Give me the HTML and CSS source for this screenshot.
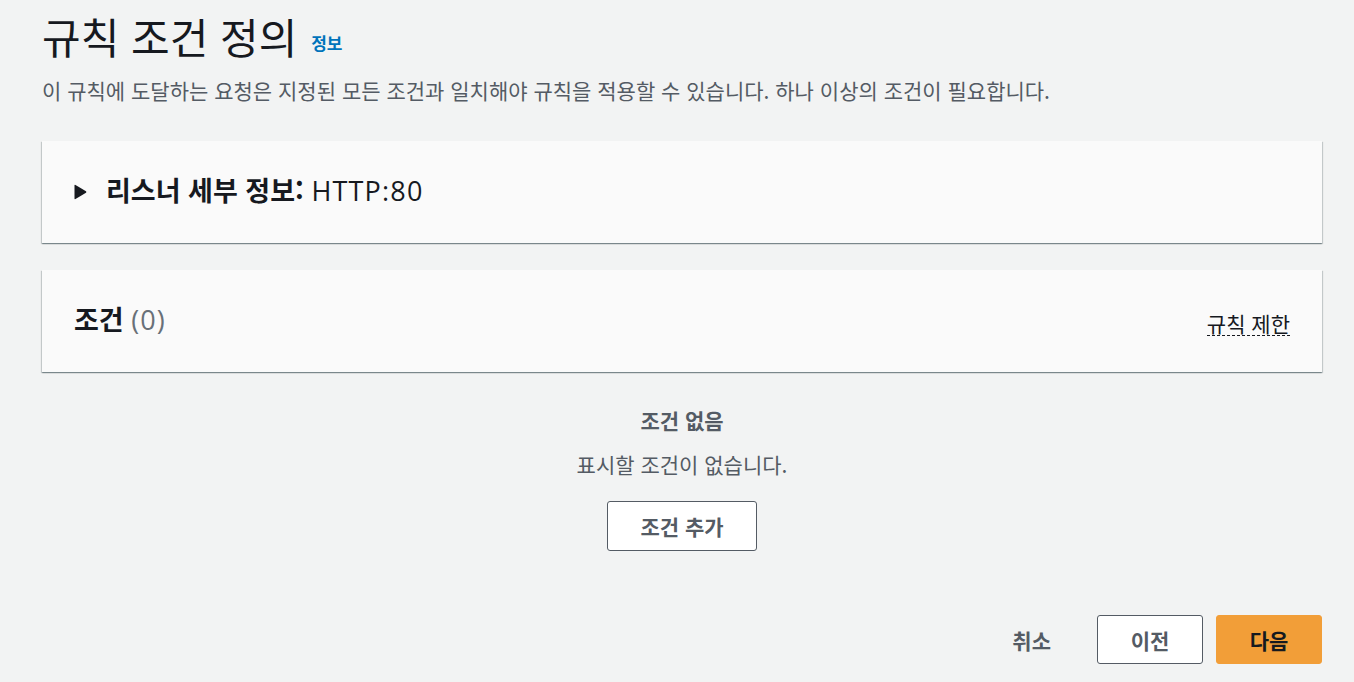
FILE: index.html
```html
<!DOCTYPE html>
<html lang="ko">
<head>
<meta charset="utf-8">
<title>규칙 조건 정의</title>
<link rel="stylesheet" href="styles.css">
</head>
<body>
<main class="page">
  <header class="page-header">
    <h1 class="title">규칙 조건 정의 <a class="info-link" href="#">정보</a></h1>
    <p class="description">이 규칙에 도달하는 요청은 지정된 모든 조건과 일치해야 규칙을 적용할 수 있습니다. 하나 이상의 조건이 필요합니다.</p>
  </header>

  <section class="panel">
    <div class="panel-head expander">
      <svg class="caret" width="14" height="16" viewBox="0 0 14 16"><path d="M1.5 1.5 Q1.5 0.5 2.5 1 L13 7.2 Q13.8 8 13 8.8 L2.5 15 Q1.5 15.5 1.5 14.5 Z" fill="#16191f"/></svg>
      <h2 class="panel-title">리스너 세부 정보: <span class="regular">HTTP:80</span></h2>
    </div>
  </section>

  <section class="panel">
    <div class="panel-head conditions">
      <h2 class="panel-title">조건 <span class="count">(0)</span></h2>
      <span class="limits">규칙 제한</span>
    </div>
  </section>

  <div class="empty">
    <div class="empty-title">조건 없음</div>
    <div class="empty-text">표시할 조건이 없습니다.</div>
    <button class="btn">조건 추가</button>
  </div>

  <footer class="actions">
    <button class="btn-link">취소</button>
    <button class="btn btn-footer">이전</button>
    <button class="btn btn-primary btn-footer">다음</button>
  </footer>
</main>
</body>
</html>
```

FILE: styles.css
```css
* { box-sizing: border-box; }
html, body { margin: 0; padding: 0; }
body {
  background: #f2f3f3;
  font-family: "Open Sans", "Noto Sans CJK KR", sans-serif;
  color: #16191f;
  width: 1354px;
  height: 682px;
  overflow: hidden;
}
.page {
  padding: 0 32px 0 42px;
}
.page-header {
  padding-top: 8px;
  height: 141px;
}
.title {
  margin: 0;
  font-family: "Noto Sans CJK KR", sans-serif;
  font-size: 42px;
  font-weight: 400;
  line-height: 56px;
  color: #16191f;
}
.info-link {
  font-size: 17px;
  font-weight: 700;
  color: #0073bb;
  text-decoration: none;
  margin-left: 2px;
  vertical-align: 4px;
}
.description {
  margin: 5px 0 0;
  font-family: "Noto Sans CJK KR", sans-serif;
  font-size: 21px;
  line-height: 28px;
  color: #545b64;
}
.panel {
  background: #fafafa;
  height: 102px;
  margin-bottom: 27px;
  box-shadow: 0 1px 1px 0 rgba(0,28,36,.3), 1px 1px 1px 0 rgba(0,28,36,.15), -1px 1px 1px 0 rgba(0,28,36,.15);
}
.panel-head {
  height: 100%;
  display: flex;
  align-items: center;
  padding: 0 32px 5px;
}
.caret { margin-left: -1px; margin-right: 19px; margin-top: 4px; }
.panel-title {
  margin: 0;
  font-family: "Noto Sans CJK KR", sans-serif;
  font-size: 27px;
  font-weight: 700;
}
.regular { font-family: "Open Sans", "Noto Sans CJK KR", sans-serif; font-weight: 400; letter-spacing: 1.2px; }
.count { font-family: "Open Sans", sans-serif; font-weight: 400; color: #687078; letter-spacing: 1px; }
.conditions { justify-content: space-between; }
.limits {
  font-family: "Noto Sans CJK KR", sans-serif;
  font-size: 21px;
  color: #16191f;
  border-bottom: 1px dashed #16191f;
  line-height: 24px;
  margin-top: 10px;
}
.empty {
  display: flex;
  flex-direction: column;
  align-items: center;
  padding-top: 6px;
  font-family: "Noto Sans CJK KR", sans-serif;
  color: #545b64;
}
.empty-title { font-size: 21px; font-weight: 700; line-height: 30px; }
.empty-text { font-size: 21px; line-height: 30px; margin-top: 14px; }
.btn {
  font-family: "Noto Sans CJK KR", sans-serif;
  font-size: 21px;
  font-weight: 700;
  color: #545b64;
  background: #fff;
  border: 1px solid #545b64;
  border-radius: 3px;
  height: 50px;
  padding: 0 32px;
  margin-top: 22px;
  cursor: pointer;
}
.actions {
  display: flex;
  justify-content: flex-end;
  align-items: center;
  gap: 13px;
  margin-top: 64px;
}
.btn-link {
  font-family: "Noto Sans CJK KR", sans-serif;
  font-size: 21px;
  font-weight: 700;
  color: #545b64;
  background: none;
  border: 0;
  padding: 0 16px;
  height: 48px;
  margin-right: 17px;
}
.btn-footer {
  margin-top: 0;
  height: 49px;
  width: 106px;
  padding: 0;
}
.btn-primary {
  background: #f29e38;
  border-color: #f29e38;
  color: #16191f;
}
```
